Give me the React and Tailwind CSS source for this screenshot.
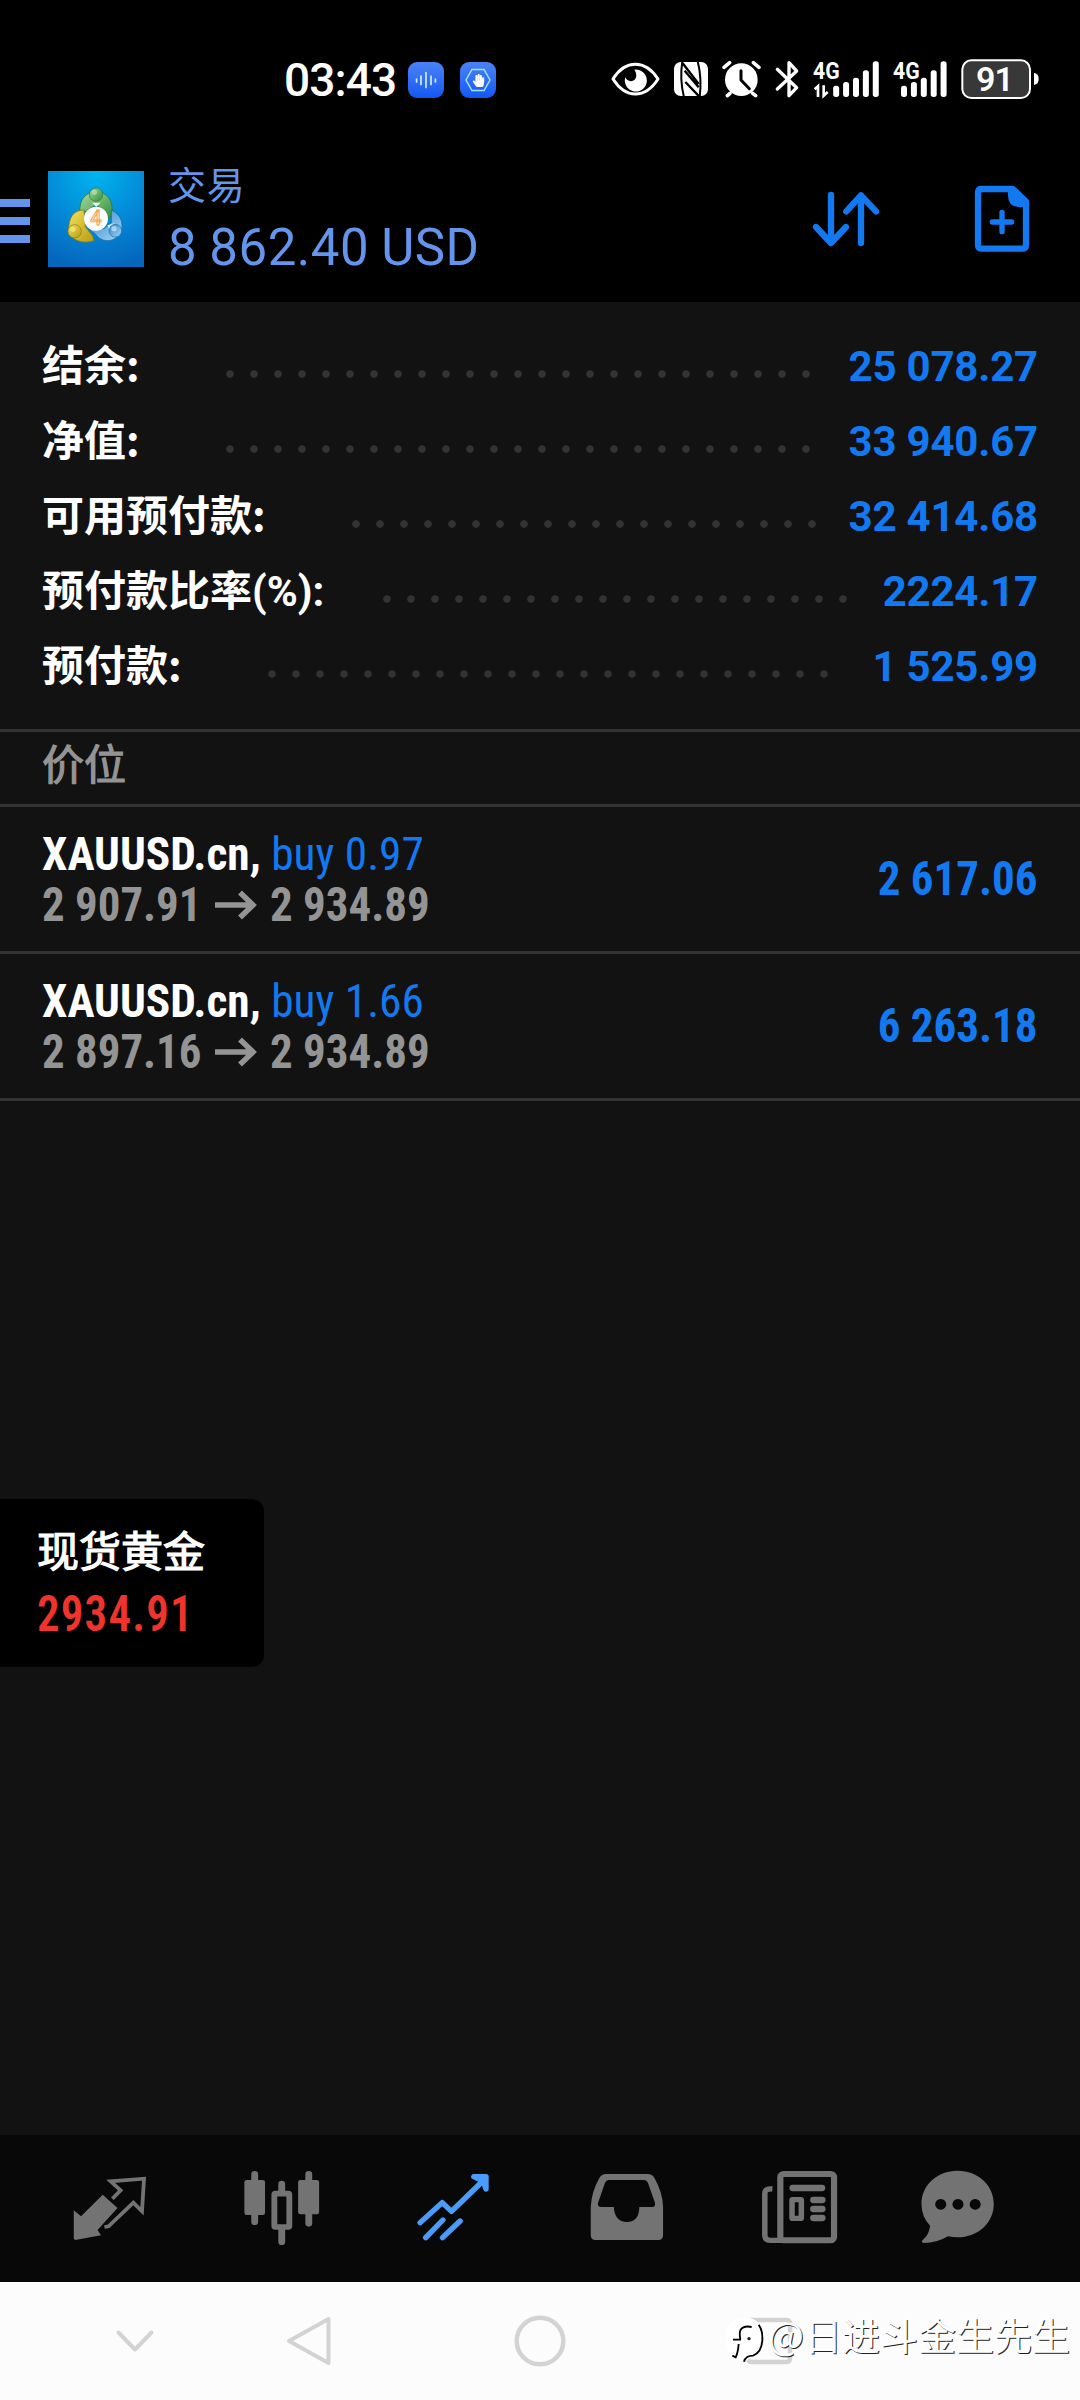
import React from "react";
import { FaHandPaper } from "react-icons/fa";

const summary = [
  { label: "结余", colon: ":", value: "25 078.27", labelCls: "w-[176px]", dotsCls: "w-[600px]" },
  { label: "净值", colon: ":", value: "33 940.67", labelCls: "w-[176px]", dotsCls: "w-[600px]" },
  { label: "可用预付款", colon: ":", value: "32 414.68", labelCls: "w-[302px]", dotsCls: "w-[480px]" },
  { label: "预付款比率(%):", colon: "", value: "2224.17", labelCls: "w-[333px]", dotsCls: "w-[480px]" },
  { label: "预付款", colon: ":", value: "1 525.99", labelCls: "w-[218px]", dotsCls: "w-[576px]" },
];

const positions = [
  { symbol: "XAUUSD.cn,", side: "buy 0.97", open: "2 907.91", now: "2 934.89", profit: "2 617.06" },
  { symbol: "XAUUSD.cn,", side: "buy 1.66", open: "2 897.16", now: "2 934.89", profit: "6 263.18" },
];

function SignalBars({ x, tops }) {
  return tops.map((t, i) => (
    <rect key={i} x={x + i * 29.7} y={t} width="18" height={171 - t} rx="8" fill="#fff" />
  ));
}

function StatusBar() {
  return (
    <div className="flex h-[130px] pt-[56px] text-white">
      <div className="ml-[284px] h-[48px] w-[124px] whitespace-nowrap text-[46px] leading-[48px] font-medium tracking-[-0.9px]">03:43</div>
      <div className="mt-[6px] flex size-9 items-center justify-center rounded-[9px] bg-linear-to-b from-[#4a82f6] to-[#1357f2]">
        <svg viewBox="0 0 36 36" className="size-9" stroke="#cdeeff" strokeWidth="1.7" strokeLinecap="round">
          <path d="M8.6 17v3M13 14v8.5M18 10.5v15M23 14v8.5M27.4 17v3" />
        </svg>
      </div>
      <div className="relative mt-[6px] ml-4 flex size-9 items-center justify-center rounded-[9px] bg-linear-to-b from-[#4a82f6] to-[#1357f2]">
        <svg viewBox="0 0 36 36" className="absolute size-9" fill="none" stroke="#9fe4ff" strokeWidth="1.5">
          <path d="M12 7.5h12l6 10.5-6 10.500h-12L6 18z" />
        </svg>
        <FaHandPaper className="size-[13px]" />
      </div>
      <svg viewBox="0 48 1440 144" className="ml-[104px] h-[48px] w-[480px] shrink-0" fill="none">
        <path d="M39 117C60 84 84 73 106 73s47 12 68 44c-21 33-45 45-68 45s-46-12-67-45z" stroke="#fff" strokeWidth="9" strokeLinejoin="round" />
        <path d="M103 89a33 33 0 1 1-27 23c4 9 12 13 20 11 14-4 17-20 7-34z" fill="#fff" />
        <rect x="222" y="66" width="102" height="102" rx="20" fill="#fff" />
        <path d="M247 64C242 95 244 140 252 172" stroke="#000" strokeWidth="6" />
        <path d="M293 64C301 95 303 140 299 172" stroke="#000" strokeWidth="6" />
        <path d="M248 70l48 62M254 92l42 50M256 126l42 44" stroke="#000" strokeWidth="7" />
        <circle cx="424" cy="119" r="49" fill="#fff" />
        <path d="M372 82l17-14M477 82l-17-14M390 160l-8 7M458 160l9 7" stroke="#fff" strokeWidth="11" strokeLinecap="round" />
        <path d="M423 92v28l25 26" stroke="#000" strokeWidth="9" strokeLinecap="round" strokeLinejoin="round" />
        <path d="M532 88l58 55-23 24V68l23 25-58 54" stroke="#fff" strokeWidth="10" strokeLinecap="round" strokeLinejoin="round" />
        <text x="639" y="116" fontSize="72" fontWeight="700" fill="#fff" textLength="80" lengthAdjust="spacingAndGlyphs">4G</text>
        <path d="M644 148l10-9v32M671 136v31l12-11" stroke="#fff" strokeWidth="8" />
        <SignalBars x={699.500} tops={[137, 126, 113, 91, 64]} />
        <text x="879" y="116" fontSize="72" fontWeight="700" fill="#fff" textLength="80" lengthAdjust="spacingAndGlyphs">4G</text>
        <SignalBars x={903} tops={[137, 126, 113, 91, 64]} />
        <rect x="1087" y="61" width="203" height="113" rx="27" stroke="#fff" strokeWidth="6" fill="#383838" />
        <text x="1185" y="153" fontSize="102" fontWeight="600" fill="#fff" textAnchor="middle" textLength="114">91</text>
        <path d="M1302 99q14 2 14 18t-14 18z" fill="#fff" />
      </svg>
    </div>
  );
}

function Logo() {
  return (
    <svg viewBox="144 63 288 288" className="size-24">
      <defs>
        <radialGradient id="sky" cx="0.5" cy="0.02" r="1">
          <stop offset="0" stopColor="#00b4ee" />
          <stop offset="0.55" stopColor="#0488d6" />
          <stop offset="1" stopColor="#0566bd" />
        </radialGradient>
        <linearGradient id="green" x1="0" y1="0" x2="1" y2="1">
          <stop offset="0" stopColor="#a9dba0" />
          <stop offset="1" stopColor="#2f8f3a" />
        </linearGradient>
        <linearGradient id="gold" x1="0" y1="0" x2="1" y2="1">
          <stop offset="0" stopColor="#f3e25a" />
          <stop offset="1" stopColor="#b79a12" />
        </linearGradient>
        <linearGradient id="azure" x1="0" y1="0" x2="1" y2="1">
          <stop offset="0" stopColor="#2d83c8" />
          <stop offset="1" stopColor="#a5d8f6" />
        </linearGradient>
      </defs>
      <rect x="144" y="63" width="288" height="288" fill="url(#sky)" />
      <path d="M239 186c0-40 18-60 50-60s50 22 48 66l-12 14-36-42-32 20z" fill="url(#green)" stroke="#2c7a3e" strokeWidth="2.500" />
      <path d="M252 180c-34 0-46 26-46 60 6 30 40 44 76 32l-4-14-22-28z" fill="url(#gold)" stroke="#8a7a10" strokeWidth="2.500" />
      <path d="M334 180c30 14 38 42 28 68-14 26-54 36-76 4l-20-14 46-2 22-18z" fill="url(#azure)" stroke="#1d6aa8" strokeWidth="2.500" />
      <path d="M322 226l22-6-12 26z" fill="#d9efff" />
      <circle cx="288" cy="134" r="20" fill="url(#green)" stroke="#2c7a3e" strokeWidth="2" />
      <circle cx="283" cy="127" r="8" fill="#d3efcb" opacity="0.5" />
      <circle cx="224" cy="244" r="20" fill="url(#gold)" stroke="#8a7a10" strokeWidth="2" />
      <circle cx="219" cy="238" r="8" fill="#fdf6ae" opacity="0.5" />
      <circle cx="346" cy="242" r="19" fill="url(#azure)" stroke="#1d6aa8" strokeWidth="2" />
      <circle cx="342" cy="236" r="8" fill="#e6f6ff" opacity="0.6" />
      <path d="M276 158l13 12 13-12z" fill="#eef8e8" />
      <circle cx="288" cy="206" r="36" fill="#fff" />
      <text x="288" y="226" fontSize="60" fill="#ffe2c4" stroke="#e8a45a" strokeWidth="2.500" textAnchor="middle" fontWeight="500">4</text>
    </svg>
  );
}

function Header() {
  return (
    <header className="flex h-[172px] text-[#6495ed]">
      <div className="mt-[69px] flex w-[30px] flex-col gap-[10px]">
        <span className="h-2 bg-[#6495ed]" />
        <span className="h-2 bg-[#6495ed]" />
        <span className="h-2 bg-[#6495ed]" />
      </div>
      <div className="mt-[41px] ml-[18px]"><Logo /></div>
      <div className="ml-[24px] pt-[32px] whitespace-nowrap">
        <div className="text-[38px] leading-[49px] tracking-[0.8px]">交易</div>
        <div className="mt-[7px] text-[51px] leading-[60px] tracking-[0.5px] [word-spacing:-1px]">8 862.40 USD</div>
      </div>
      <svg viewBox="90 117 216 180" className="mt-[59px] ml-auto h-[60px] w-[72px]" fill="none" stroke="#1279f0" strokeWidth="19" strokeLinecap="round" strokeLinejoin="round">
        <path d="M153 135v144M108 231l45 48 45-48M243 279V136M199 184l44-48 45 48" />
      </svg>
      <svg viewBox="576 99 180 216" className="mt-[53px] mr-[48px] ml-[90px] h-[72px] w-[60px]" fill="none" stroke="#1279f0">
        <path d="M600 117h98l40 38v129q0 12-12 12H606q-12 0-12-12V129q0-12 12-12z" strokeWidth="19" strokeLinejoin="round" />
        <path d="M684 110h20l43 42v19h-33q-30-4-30-34z" fill="#1279f0" stroke="none" />
        <path d="M666 187v58M637 216h58" strokeWidth="16" strokeLinecap="round" />
      </svg>
    </header>
  );
}

const tabs = [
  {
    box: "204 144 232.300 240", cell: "w-[172.500px]", color: "text-[#737373]",
    art: (
      <>
        <path fill="currentColor" d="M299 224l43 40-58 66 10 16-75 14-4-4v-85l21 18z" />
        <path fill="none" stroke="currentColor" strokeWidth="11" d="M327 236l24-25-29-27 97-8-6 98-25-26-72 71-12 2" />
      </>
    ),
  },
  {
    box: "705 144 232.300 240", cell: "w-[172.500px]", color: "text-[#737373]",
    art: (
      <>
        <path fill="none" stroke="currentColor" strokeWidth="20" strokeLinecap="round" d="M739 163v142M896 163v147M817.500 192v24M817.500 325v40" />
        <rect fill="currentColor" x="709" y="180" width="60" height="105" rx="7" />
        <rect fill="currentColor" x="865" y="180" width="61" height="103" rx="7" />
        <rect fill="none" stroke="currentColor" strokeWidth="17" x="796" y="221" width="43.500" height="100" rx="3" />
      </>
    ),
  },
  {
    box: "1206 144 232.300 240", cell: "w-[172.500px]", color: "text-[#4a9cfa]",
    art: (
      <>
        <path fill="none" stroke="currentColor" strokeWidth="16" strokeLinecap="round" strokeLinejoin="round" d="M1221 308l64-60 27 26 94-94M1237 353l50-53M1286 353l51-50" />
        <path fill="currentColor" stroke="currentColor" strokeWidth="16" strokeLinecap="round" strokeLinejoin="round" d="M1377 170h35v37l-7-23z" />
      </>
    ),
  },
  {
    box: "139 144 232.300 240", cell: "w-[172.500px]", color: "text-[#737373]",
    art: (
      <path fill="currentColor" fillRule="evenodd" d="M192 162h120q14 0 20 12 24 44 25 86v86q0 14-14 14H161q-14 0-14-14v-86q2-44 25-86 6-12 20-12zm8 18q-8 0-12 10l-20 59q-2 12 10 12h36q2 44 38 45 36-1 36-45h37q12 0 8-14l-18-53q-4-14-14-14z" />
    ),
  },
  {
    box: "640 144 232.300 240", cell: "w-[172.500px]", color: "text-[#737373]",
    art: (
      <>
        <rect fill="none" stroke="currentColor" strokeWidth="18" x="699" y="162" width="156" height="199" rx="10" />
        <path fill="none" stroke="currentColor" strokeWidth="16" d="M676 207q-22-2-22 14v124q0 16 16 16h36" />
        <path fill="none" stroke="currentColor" strokeWidth="19" strokeLinecap="round" d="M735 204h85M795 240h26M795 267h26M795 294h26" />
        <rect fill="none" stroke="currentColor" strokeWidth="16" x="733" y="239" width="27" height="56" rx="2" />
      </>
    ),
  },
  {
    box: "1098 144 232.300 240", cell: "w-[143px]", color: "text-[#737373]",
    art: (
      <path fill="currentColor" fillRule="evenodd" d="M1213 152c60 0 105 44 105 100s-45 100-105 100q-14 0-28-3-32 20-70 20-9-2-4-8 20-18 22-44-25-27-25-65c0-56 45-100 105-100zm-49 85a16 16 0 1 0 .1 0zm50 0a16 16 0 1 0 .1 0zm50 0a16 16 0 1 0 .1 0z" />
    ),
  },
];

function TabBar() {
  return (
    <nav className="flex h-[147px] bg-[#080808] pt-[33px] pl-[24px]">
      {tabs.map((t) => (
        <div key={t.box} className={`flex justify-center ${t.cell} ${t.color}`}>
          <svg viewBox={t.box} preserveAspectRatio="none" className="size-20">{t.art}</svg>
        </div>
      ))}
    </nav>
  );
}

function SystemNav() {
  return (
    <div className="relative flex h-[118px] bg-[#fcfcfc] pt-[29px]">
      <svg viewBox="0 0 60 60" className="ml-[104.500px] size-[60px]" fill="none" stroke="#d3d3d3" strokeWidth="4" strokeLinecap="round" strokeLinejoin="round">
        <path d="M13.500 21.500L30 38.500l16.500-17" />
      </svg>
      <svg viewBox="0 0 60 60" className="ml-[114px] size-[60px]" fill="none" stroke="#d3d3d3" strokeWidth="4" strokeLinejoin="round">
        <path d="M49.500 8v44L10 30z" />
      </svg>
      <svg viewBox="0 0 60 60" className="ml-[171.500px] size-[60px]" fill="none" stroke="#d3d3d3" strokeWidth="4.500">
        <circle cx="30" cy="30" r="23.300" />
      </svg>
      <svg viewBox="0 0 60 60" className="ml-[169px] size-[60px]" fill="none" stroke="#d3d3d3" strokeWidth="4.500">
        <rect x="9" y="9" width="42" height="42" rx="3" />
      </svg>
      <div className="absolute top-[32px] left-[725px] flex items-start text-white">
        <svg viewBox="30 30 120 150" className="h-[50px] w-[40px]" fill="none">
          <path d="M30 100q4-54 60-60 52 4 58 60-4 44-34 58-16 6-26 18l-20-16q-34-10-38-60z" fill="#fff" />
          <path d="M110 69q-24-5-33 8-5 8-1 28M54 107h24M71 120q-2 26-9 40l-10-5" stroke="#000" strokeWidth="5.500" />
          <path d="M131 62q13 18 11 48-3 36-28 45-22 0-27 18" stroke="#000" strokeWidth="5.500" />
          <circle cx="102" cy="104" r="5" fill="#222" />
        </svg>
        <span className="-mt-[5px] ml-[3px] font-['Noto_Sans_CJK_SC',sans-serif] text-[38px] leading-[50px] whitespace-nowrap [text-shadow:1px_1px_0_#222]">@日进斗金生先生</span>
      </div>
    </div>
  );
}

export default function App() {
  return (
    <div className="relative flex h-[2400px] w-[1080px] flex-col overflow-hidden bg-black font-[Roboto,'Noto_Sans_CJK_SC',sans-serif]">
      <StatusBar />
      <Header />
      <main className="flex-1 bg-[#121212]">
        <section className="h-[430px] border-b-[3px] border-[#333333] pt-[27px] pr-[42px] pl-[42px]">
          {summary.map((r) => (
            <div key={r.label} className="flex h-[75px] items-center text-[42px] font-medium whitespace-nowrap">
              <span className={`flex shrink-0 items-baseline font-bold text-white ${r.labelCls}`}>
                <span>{r.label}</span>
                <span className="font-['Noto_Sans_CJK_SC',sans-serif] leading-none">{r.colon}</span>
              </span>
              <span className={`mt-[15px] h-6 shrink-0 bg-[radial-gradient(circle,#333333_3.300px,transparent_4.200px)] bg-size-[24px_24px] ${r.dotsCls}`} />
              <span className="ml-auto font-bold tracking-[-0.2px] text-[#1279f0]">{r.value}</span>
            </div>
          ))}
        </section>
        <div className="flex h-[75px] items-center border-b-[3px] border-[#333333] pb-[5px] pl-[42px] text-[42px] text-[#949494] [-webkit-text-stroke:1.2px_#949494]">价位</div>
        {positions.map((p) => (
          <div key={p.profit} className="flex h-[147px] items-center justify-between border-b-[3px] border-[#333333] pr-[42px] pl-[42px] whitespace-nowrap [font-stretch:75%]">
            <div>
              <div className="origin-left scale-x-[0.965] text-[47px] leading-[51px]">
                <span className="font-bold text-white">{p.symbol}</span> <span className="text-[#1279f0]">{p.side}</span>
              </div>
              <div className="flex items-center text-[48px] leading-[51px] font-bold text-[#949494]">
                <span className="w-[172px] origin-left scale-x-[0.935]">{p.open}</span>
                <svg viewBox="0 0 44 32" className="mr-[12px] h-8 w-11" fill="none" stroke="currentColor" strokeWidth="5.500">
                  <path d="M1 16h38M26 3.500L39 16 26 28.500" />
                </svg>
                <span className="origin-left scale-x-[0.937]">{p.now}</span>
              </div>
            </div>
            <div className="origin-right scale-x-[0.937] text-[48px] font-bold text-[#1279f0]">{p.profit}</div>
          </div>
        ))}
      </main>
      <TabBar />
      <SystemNav />
      <div className="absolute top-[1499px] left-0 h-[168px] w-[264px] rounded-r-xl bg-black pt-[27px] pl-[37px] whitespace-nowrap">
        <div className="text-[42px] leading-[54px] text-white [-webkit-text-stroke:1.2px_#ffffff]">现货黄金</div>
        <div className="mt-[3px] origin-left scale-x-90 text-[50px] leading-[62px] font-semibold tracking-[1.3px] text-[#ee342c] [font-stretch:75%]">2934.91</div>
      </div>
    </div>
  );
}
